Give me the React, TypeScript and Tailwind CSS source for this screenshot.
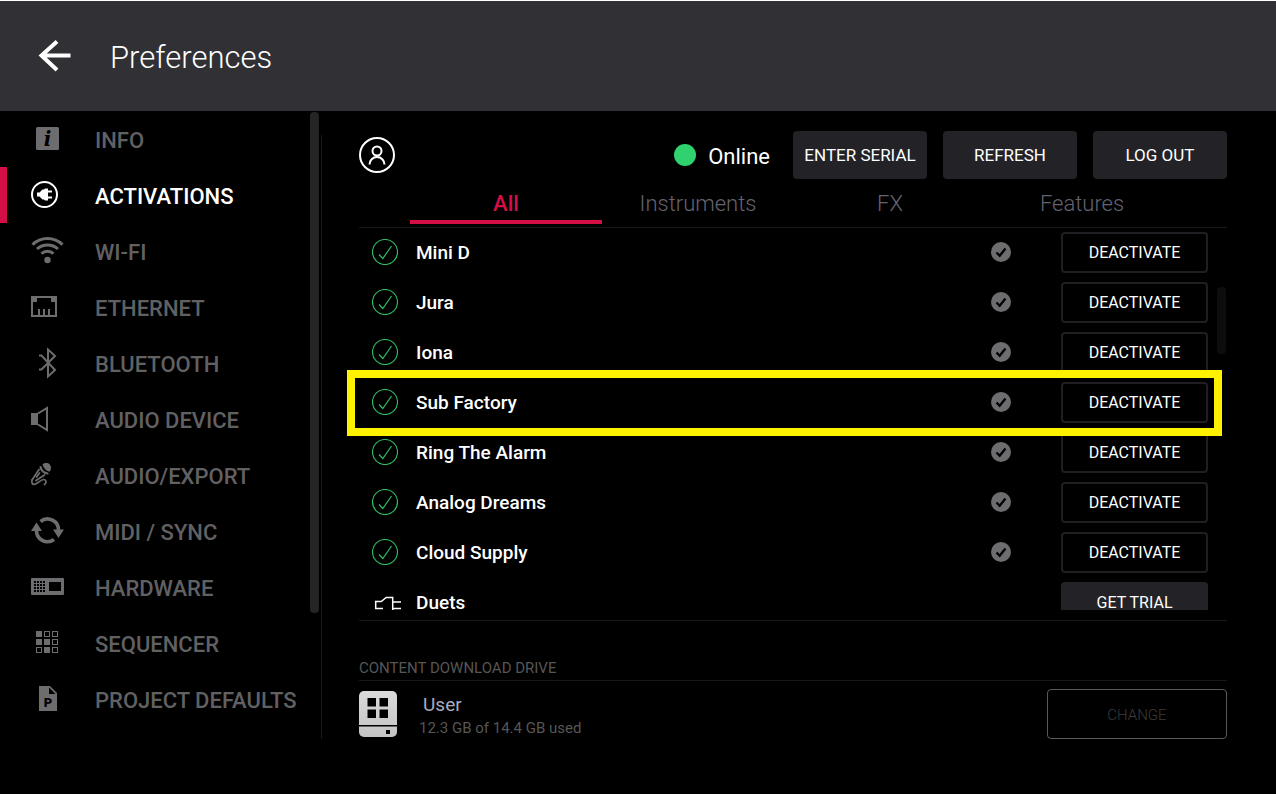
import React, { useState } from 'react';

const GRAY = '#6d6d70';

const ICONS: Record<string, React.ReactNode> = {
  info: (
    <>
      <rect x="5" y="4" width="23" height="23" rx="1.5" fill={GRAY} />
      <text x="16.5" y="23" fontSize="20" fontWeight="700" fontStyle="italic" fontFamily="DejaVu Serif, serif" textAnchor="middle" fill="#000">i</text>
    </>
  ),
  activations: (
    <>
      <circle cx="13.5" cy="15.5" r="12.5" fill="none" stroke="#fff" strokeWidth="2" />
      <path d="M6 13.500h2.500l3-3H13l1-1h3v2h4v2h-4v4h4v2h-4v2h-3l-1-1h-1.500l-3-3H6z" fill="#fff" />
    </>
  ),
  wifi: (
    <g fill="none" stroke={GRAY} strokeWidth="3">
      <circle cx="16.5" cy="25" r="3.2" fill={GRAY} stroke="none" />
      <path d="M1.5 9.6a21.5 21.5 0 0 1 30 0" />
      <path d="M6 14a15.5 15.5 0 0 1 21 0" />
      <path d="M10.5 18.6a9 9 0 0 1 12 0" />
    </g>
  ),
  ethernet: (
    <g fill={GRAY}>
      <rect x="1" y="6" width="24" height="19" fill="none" stroke={GRAY} strokeWidth="2" />
      <path d="M0 5h6v6H0zM20 5h6v6h-6zM7 18h2v7H7zM12 18h2v7h-2zM17 18h2v7h-2z" />
    </g>
  ),
  bluetooth: (
    <path d="M8 8.5h2.5L24 23l-7 6.500V2.500L24 9 10.500 22.500H8" fill="none" stroke={GRAY} strokeWidth="2" />
  ),
  speaker: (
    <g fill={GRAY}>
      <path d="M0 10h7v12H0z" />
      <path d="M7 10.500 16 5v22l-9-5.500" fill="none" stroke={GRAY} strokeWidth="2" />
    </g>
  ),
  mic: (
    <g fill="none" stroke={GRAY} strokeWidth="1.700" strokeLinecap="round" strokeLinejoin="round">
      <path d="M11.500 5.500c2-2 5.500-1.800 7.300 0 1.800 2 1.500 5.500-.3 7.200-3.500-.8-6-3.500-7-7.200z" fill={GRAY} stroke="none" />
      <path d="M9.500 8c.8 3.500 3.500 6 7 6.500" strokeWidth="2.200" />
      <path d="M8 10.500 1 21M13.500 16 5 21.500M8.500 14l-3 4" />
      <path d="M1 21c-.5 3 .3 5 2.800 4.300 3.200-1 6.200-5 9-4.800 2.500.3 3.200 3 .7 5" />
    </g>
  ),
  sync: (
    <g fill={GRAY}>
      <path d="M0 16 5.500 7.500 11 16zM22 14.500h11L27.500 23z" />
      <path d="M5.500 15a11 11 0 0 0 17.500 9.500M9.500 6.500a11 11 0 0 1 18 9" fill="none" stroke={GRAY} strokeWidth="3.600" />
    </g>
  ),
  hardware: (
    <g fill={GRAY}>
      <rect x="0" y="7" width="33" height="17" rx="1" />
      <rect x="18" y="11" width="12" height="9" fill="#000" />
      {[10, 13, 16, 19].map((y) =>
        [3, 6, 9, 12].map((x) => <rect key={`${x}-${y}`} x={x} y={y} width="2" height="2" fill="#000" />)
      )}
    </g>
  ),
  sequencer: (
    <g stroke={GRAY}>
      {[1, 0, 0, 1, 1, 0, 0, 1, 0].map((on, i) => (
        <rect key={i} x={5.5 + (i % 3) * 8} y={4.5 + Math.floor(i / 3) * 8} width="5" height="5" fill={on ? GRAY : 'none'} />
      ))}
    </g>
  ),
  project: (
    <>
      <path d="M8 3h11l7 7v18H8z" fill={GRAY} />
      <path d="M18 4.500V11h6.500z" fill="#000" />
      <text x="17" y="24" fontSize="13" fontWeight="900" fontFamily="Roboto, sans-serif" textAnchor="middle" fill="#000">P</text>
    </>
  ),
};

const MENU = [
  { icon: 'info', label: 'INFO' },
  { icon: 'activations', label: 'ACTIVATIONS' },
  { icon: 'wifi', label: 'WI-FI' },
  { icon: 'ethernet', label: 'ETHERNET' },
  { icon: 'bluetooth', label: 'BLUETOOTH' },
  { icon: 'speaker', label: 'AUDIO DEVICE' },
  { icon: 'mic', label: 'AUDIO/EXPORT' },
  { icon: 'sync', label: 'MIDI / SYNC' },
  { icon: 'hardware', label: 'HARDWARE' },
  { icon: 'sequencer', label: 'SEQUENCER' },
  { icon: 'project', label: 'PROJECT DEFAULTS' },
];

const TABS = ['All', 'Instruments', 'FX', 'Features'];

const PRODUCTS = [
  { name: 'Mini D', active: true },
  { name: 'Jura', active: true },
  { name: 'Iona', active: true },
  { name: 'Sub Factory', active: true },
  { name: 'Ring The Alarm', active: true },
  { name: 'Analog Dreams', active: true },
  { name: 'Cloud Supply', active: true },
  { name: 'Duets', active: false },
];

const ActiveIcon = () => (
  <svg className="size-[26px] shrink-0" viewBox="0 0 26 26" fill="none" stroke="#2dbd63">
    <circle cx="13" cy="13" r="12.500" strokeWidth="1.200" />
    <path d="M7 15.500l3.800 4L19.500 7" strokeWidth="1.200" />
  </svg>
);

const PlugIcon = () => (
  <svg className="size-[26px] shrink-0 overflow-visible" viewBox="0 0 26 26" fill="none" stroke="#fff" strokeWidth="1.500">
    <path d="M11 19.500H3.700V12.500h5.500l5-4h6.500V26h-6.500L11 22.500" />
    <path d="M20.500 13H29M20.500 19.500H29" />
  </svg>
);

const DownloadedIcon = () => (
  <svg className="size-5 shrink-0" viewBox="0 0 20 20">
    <circle cx="10" cy="10" r="10" fill={GRAY} />
    <path d="M5.500 10.500l3.200 3.300L14.500 6.500" fill="none" stroke="#000" strokeWidth="2.300" />
  </svg>
);

const DriveIcon = () => (
  <svg className="w-[38px] h-[46px] shrink-0" viewBox="0 0 38 46">
    <defs>
      <linearGradient id="drive" x1="0" y1="0" x2="0" y2="1">
        <stop offset="0" stopColor="#dadada" />
        <stop offset="1" stopColor="#c3c3c3" />
      </linearGradient>
    </defs>
    <rect width="38" height="46" rx="5" fill="url(#drive)" />
    <path d="M0 34h38v1.500H0zM8.500 7H17v8.500H8.500zM20.500 7H29v8.500h-8.500zM8.500 18.500H17V27H8.500zM20.500 18.500H29V27h-8.500zM27 39h4v4h-4z" fill="#000" />
  </svg>
);

const App: React.FC = () => {
  const [section, setSection] = useState('ACTIVATIONS');
  const [tab, setTab] = useState('All');

  return (
    <div className="flex flex-col h-screen min-h-[640px] bg-black text-white font-['Roboto',sans-serif] border-t border-white overflow-hidden">
      <header className="flex items-center gap-[39px] h-[110px] shrink-0 bg-[#313035] pl-[38px]">
        <button aria-label="Back">
          <svg className="w-[33px] h-8" viewBox="0 0 33 32" fill="none" stroke="#fff" strokeWidth="4">
            <path d="M19 1.500 3.500 15.500 19 30M3 15.500h29.500" />
          </svg>
        </button>
        <h1 className="pt-1 text-[31px] font-light">Preferences</h1>
      </header>

      <div className="flex flex-1 min-h-0">
        {/* Sidebar */}
        <aside className="flex w-[322px] shrink-0 pb-[55px]">
          <nav className="flex-1">
            {MENU.map(({ icon, label }) => (
              <button
                key={label}
                onClick={() => setSection(label)}
                className={`flex items-center w-full h-14 gap-[30px] pl-6 border-l-[7px] text-left text-[22px] font-medium whitespace-nowrap ${
                  section === label ? 'border-[#d40f45] text-white' : 'border-transparent text-[#616163]'
                }`}
              >
                <svg className="w-[34px] h-8 shrink-0" viewBox="0 0 34 32">{ICONS[icon]}</svg>
                <span className="pt-0.5">{label}</span>
              </button>
            ))}
          </nav>
          <div className="w-[9px] h-[501px] mt-px mr-0.5 rounded-sm bg-[#252525]" />
          <div className="w-px mt-6 bg-[#171719]" />
        </aside>

        {/* Activations panel */}
        <main className="flex flex-col flex-1 min-w-0 pt-5 pb-[55px] pl-[37px] pr-[49px]">
          <div className="flex items-center h-12 gap-4 shrink-0">
            <button aria-label="Account" className="mr-auto">
              <svg className="size-9" viewBox="0 0 36 36" fill="none" stroke="#fff" strokeWidth="2">
                <circle cx="18" cy="18" r="17" />
                <circle cx="18" cy="14" r="4.500" />
                <path d="M10.500 27.500a7.500 7.500 0 0 1 15 0" />
              </svg>
            </button>
            <div className="flex items-center gap-3 mr-[7px] text-[22px]">
              <span className="size-[22px] rounded-full bg-[#2fd26e]" />
              <span className="pt-0.5">Online</span>
            </div>
            {['ENTER SERIAL', 'REFRESH', 'LOG OUT'].map((label) => (
              <button key={label} className="w-[134px] h-12 pt-0.5 rounded bg-[#232226] text-[17px] whitespace-nowrap">
                {label}
              </button>
            ))}
          </div>

          <div role="tablist" className="flex h-[49px] shrink-0 pl-[51px] pr-[49px] pb-[3px] border-b border-[#171719]">
            {TABS.map((name) => (
              <button
                key={name}
                role="tab"
                aria-selected={tab === name}
                onClick={() => setTab(name)}
                className={`flex-1 pt-2 border-b-4 text-[22px] ${
                  tab === name ? 'border-[#d40f45] text-[#d40f45] font-medium' : 'border-transparent text-[#646370] font-light'
                }`}
              >
                {name}
              </button>
            ))}
          </div>

          <div className="relative flex-1 min-h-0 -mt-px mb-[10px]">
            <ul className="h-full overflow-hidden">
              {PRODUCTS.map(({ name, active }) => (
                <li key={name} className="flex items-center h-[50px] pl-[13px] pr-[19px]">
                  {active ? <ActiveIcon /> : <PlugIcon />}
                  <span className="flex-1 ml-[18px] pt-px text-[19px] leading-6 font-medium">{name}</span>
                  {active && <DownloadedIcon />}
                  <button
                    className={`w-[147px] h-[41px] ml-[50px] pt-px rounded text-base leading-5 ${
                      active ? 'border-2 border-[#1f1f23]' : 'bg-[#232226]'
                    }`}
                  >
                    {active ? 'DEACTIVATE' : 'GET TRIAL'}
                  </button>
                </li>
              ))}
            </ul>
            <div className="absolute right-px top-[60px] w-[9px] h-[67px] rounded-sm bg-[#0d0d0d]" />
            <div className="absolute -left-3 right-[5px] top-[143px] h-[66px] border-8 border-[#fff200] pointer-events-none" />
          </div>

          <section className="shrink-0 pt-9 border-t border-[#171719]">
            <h2 className="h-6 text-[15px] leading-[22px] text-[#565656] border-b border-[#171719]">CONTENT DOWNLOAD DRIVE</h2>
            <div className="flex items-center h-[50px] mt-2">
              <DriveIcon />
              <div className="ml-[22px] pt-1">
                <p className="text-[19px] leading-6 pl-1 text-[#a9abbe]">User</p>
                <p className="text-[15px] leading-[22px] text-[#565656]">12.3 GB of 14.4 GB used</p>
              </div>
              <button disabled className="w-[180px] h-[50px] ml-auto pt-0.5 rounded border border-[#59595b] text-[15px] font-light text-[#3c3c3e]">
                CHANGE
              </button>
            </div>
          </section>
        </main>
      </div>
    </div>
  );
};

export default App;
